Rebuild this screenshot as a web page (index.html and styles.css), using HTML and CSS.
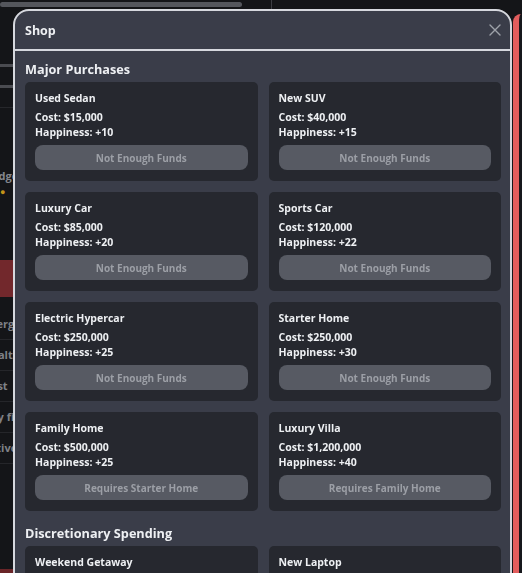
FILE: index.html
```html
<!DOCTYPE html>
<html lang="en">
<head>
  <meta charset="UTF-8">
  <meta name="viewport" content="width=device-width, initial-scale=1.0">
  <title>Shop</title>
  <link rel="stylesheet" href="styles.css">
</head>
<body>
  <!-- app behind the dialog -->
  <div class="app">
    <aside class="sidebar">
      <div class="meter"></div>
      <div class="bar-line first"></div>
      <div class="bar-line"></div>
      <div class="divider"></div>
      <div class="side-text budget">Budget</div>
      <div class="coin">●</div>
      <div class="alert"></div>
      <ul class="side-list">
        <li>Energy</li>
        <li>Health</li>
        <li>First</li>
        <li>Buy fi</li>
        <li>Active</li>
      </ul>
      <div class="side-foot"></div>
    </aside>
    <main class="main">
      <div class="red-panel"></div>
    </main>
  </div>

  <div class="modal">
    <div class="modal-head">
      <h2>Shop</h2>
      <button class="close" aria-label="Close">
        <svg width="12" height="12" viewBox="0 0 12 12"><path d="M1 1 L11 11 M11 1 L1 11" stroke="#9ea2aa" stroke-width="1.4" stroke-linecap="round"/></svg>
      </button>
    </div>
    <div class="modal-body">
      <section class="shop-section">
        <h3>Major Purchases</h3>
        <div class="items">
          <div class="item">
            <div class="item-name">Used Sedan</div>
            <div class="item-stat">Cost: $15,000</div>
            <div class="item-stat">Happiness: +10</div>
            <button class="buy" disabled>Not Enough Funds</button>
          </div>
          <div class="item">
            <div class="item-name">New SUV</div>
            <div class="item-stat">Cost: $40,000</div>
            <div class="item-stat">Happiness: +15</div>
            <button class="buy" disabled>Not Enough Funds</button>
          </div>
          <div class="item">
            <div class="item-name">Luxury Car</div>
            <div class="item-stat">Cost: $85,000</div>
            <div class="item-stat">Happiness: +20</div>
            <button class="buy" disabled>Not Enough Funds</button>
          </div>
          <div class="item">
            <div class="item-name">Sports Car</div>
            <div class="item-stat">Cost: $120,000</div>
            <div class="item-stat">Happiness: +22</div>
            <button class="buy" disabled>Not Enough Funds</button>
          </div>
          <div class="item">
            <div class="item-name">Electric Hypercar</div>
            <div class="item-stat">Cost: $250,000</div>
            <div class="item-stat">Happiness: +25</div>
            <button class="buy" disabled>Not Enough Funds</button>
          </div>
          <div class="item">
            <div class="item-name">Starter Home</div>
            <div class="item-stat">Cost: $250,000</div>
            <div class="item-stat">Happiness: +30</div>
            <button class="buy" disabled>Not Enough Funds</button>
          </div>
          <div class="item">
            <div class="item-name">Family Home</div>
            <div class="item-stat">Cost: $500,000</div>
            <div class="item-stat">Happiness: +25</div>
            <button class="buy" disabled>Requires Starter Home</button>
          </div>
          <div class="item">
            <div class="item-name">Luxury Villa</div>
            <div class="item-stat">Cost: $1,200,000</div>
            <div class="item-stat">Happiness: +40</div>
            <button class="buy" disabled>Requires Family Home</button>
          </div>
        </div>
      </section>

      <section class="shop-section">
        <h3>Discretionary Spending</h3>
        <div class="items">
          <div class="item">
            <div class="item-name">Weekend Getaway</div>
            <div class="item-stat">Cost: $2,000</div>
            <div class="item-stat">Happiness: +5</div>
            <button class="buy" disabled>Not Enough Funds</button>
          </div>
          <div class="item">
            <div class="item-name">New Laptop</div>
            <div class="item-stat">Cost: $1,500</div>
            <div class="item-stat">Happiness: +4</div>
            <button class="buy" disabled>Not Enough Funds</button>
          </div>
        </div>
      </section>
    </div>
  </div>
</body>
</html>
```

FILE: styles.css
```css
html, body {
  height: 100%;
}

body {
  margin: 0;
  background-color: #141518;
  font-family: 'Open Sans', 'Noto Sans', sans-serif;
  overflow: hidden;
}

/* background app (dimmed) */
.app {
  display: flex;
  height: 100%;
}

.sidebar {
  width: 271px;
  border-right: 1px solid #3d3e44;
  display: flex;
  flex-direction: column;
  overflow: hidden;
}

.meter {
  width: 242px;
  height: 5px;
  margin-top: 2px;
  background-color: #54565c;
  border-radius: 3px;
}

.bar-line {
  width: 230px;
  height: 3px;
  margin-top: 18px;
  background-color: #4a4b50;
}

.bar-line.first {
  margin-top: 57px;
}

.divider {
  height: 1px;
  margin-top: 19px;
  background-color: #26272b;
}

.side-text {
  margin-top: 60px;
  font-size: 11px;
  font-weight: 700;
  color: #85878d;
  text-indent: -16px;
}

.coin {
  margin-top: 2px;
  font-size: 9px;
  color: #c39419;
}

.alert {
  height: 37px;
  margin-top: 62px;
  background-color: #72282c;
}

.side-list {
  list-style: none;
  margin: 12px 0 0;
  padding: 0;
}

.side-list li {
  height: 30px;
  line-height: 30px;
  font-size: 11px;
  font-weight: 700;
  color: #7f8187;
  border-bottom: 1px solid #25262a;
  text-indent: -17px;
}

.side-foot {
  margin-top: auto;
  height: 4px;
  background-color: #6a2528;
}

.main {
  flex: 1;
  padding: 14px 0 0 241px;
}

.red-panel {
  height: 100%;
  border-left: 6px solid #e25d5d;
  border-radius: 8px 0 0 0;
  background-color: #17181c;
}

/* shop dialog */
.modal {
  position: fixed;
  left: 13px;
  top: 9px;
  width: 495px;
  height: 640px;
  background-color: #3a3d49;
  border: 2px solid #d6d8de;
  border-radius: 16px;
  overflow: hidden;
  color: #eef0f3;
}

.modal-head {
  display: flex;
  align-items: center;
  justify-content: space-between;
  height: 38px;
  padding: 0 9px 0 10px;
  border-bottom: 2px solid #d6d8de;
}

.modal-head h2 {
  margin: 0;
  font-size: 12.5px;
  font-weight: 700;
}

.close {
  display: flex;
  padding: 0;
  background: none;
  border: none;
  cursor: pointer;
}

.modal-body {
  padding: 8px 9px 0 10px;
}

.shop-section + .shop-section {
  margin-top: 12px;
}

.shop-section h3 {
  margin: 0 0 3px;
  font-size: 12.7px;
  line-height: 20px;
  font-weight: 700;
}

.items {
  display: grid;
  grid-template-columns: 1fr 1fr;
  gap: 11px;
}

.item {
  display: flex;
  flex-direction: column;
  padding: 8px 10px 11px;
  background-color: #26282f;
  border-radius: 5px;
}

.item-name {
  font-size: 10.5px;
  line-height: 16px;
  font-weight: 700;
  margin-bottom: 4px;
}

.item-stat {
  font-size: 10.5px;
  line-height: 15px;
  font-weight: 700;
}

.buy {
  margin-top: 5px;
  height: 25px;
  border: none;
  border-radius: 8px;
  background-color: #575a63;
  color: #9c9fa6;
  font-family: inherit;
  font-size: 10px;
  font-weight: 700;
}
```
